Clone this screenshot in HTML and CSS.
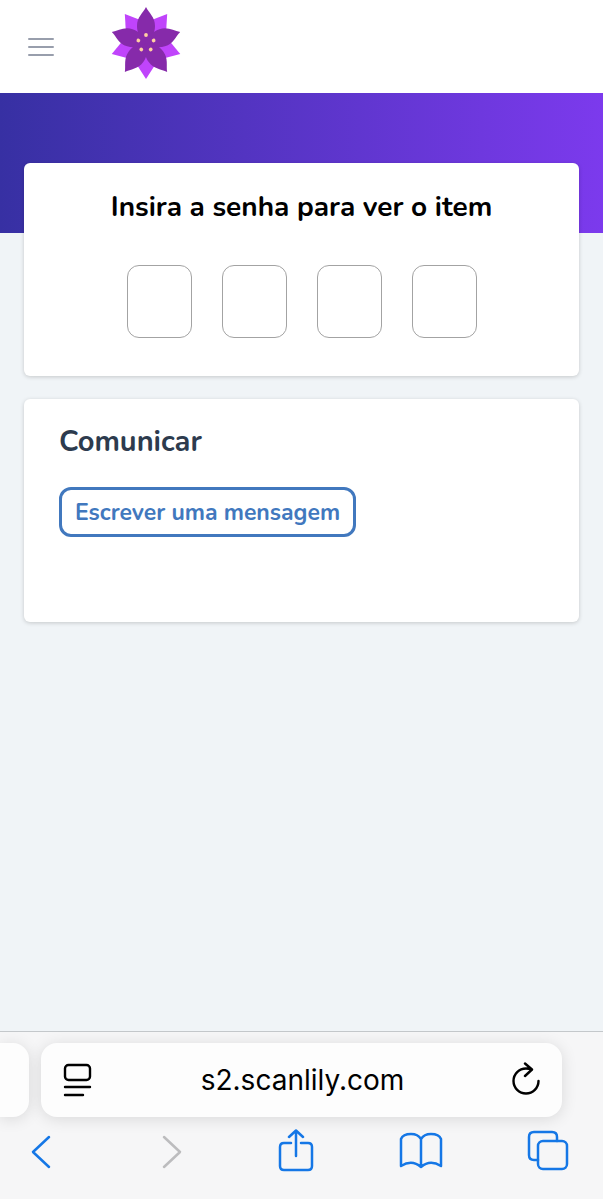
FILE: index.html
```
<!DOCTYPE html>
<html lang="pt">
  <head>
    <meta charset="UTF-8" />
    <meta name="viewport" content="width=device-width, initial-scale=1.0" />
    <title>Scanlily</title>
    <link rel="stylesheet" href="styles.css">
  </head>
  <body>
    <div class="container">
      <!-- top bar -->
      <header class="header">
        <button class="menu" type="button" aria-label="Menu">
          <svg width="28" height="20" viewBox="0 0 28 20" fill="none" stroke="#989eac" stroke-width="2" stroke-linecap="round">
            <path d="M2 2h24M2 10h24M2 18h24" />
          </svg>
        </button>
        <a class="logo" href="#" aria-label="Scanlily">
          <svg width="72" height="74" viewBox="-36 -37 72 74">
            <defs>
              <path id="back" d="M0 -36L9 -22Q12 -15 8 0H-8Q-12 -15 -9 -22Z" />
              <path id="petal" d="M0 -36C3 -30 9 -26 9 -17C9 -11 7 -6 0 0C-7 -6 -9 -11 -9 -17C-9 -26 -3 -30 0 -36Z" />
              <circle id="dot" cy="-8" r="1.9" />
            </defs>
            <g fill="#c044fb">
              <use href="#back" transform="rotate(36)" />
              <use href="#back" transform="rotate(108)" />
              <use href="#back" transform="rotate(180)" />
              <use href="#back" transform="rotate(252)" />
              <use href="#back" transform="rotate(324)" />
            </g>
            <g fill="#862aaa">
              <circle r="12" />
              <use href="#petal" />
              <use href="#petal" transform="rotate(72)" />
              <use href="#petal" transform="rotate(144)" />
              <use href="#petal" transform="rotate(216)" />
              <use href="#petal" transform="rotate(288)" />
            </g>
            <g fill="#ffd0a2">
              <use href="#dot" />
              <use href="#dot" transform="rotate(72)" />
              <use href="#dot" transform="rotate(144)" />
              <use href="#dot" transform="rotate(216)" />
              <use href="#dot" transform="rotate(288)" />
            </g>
          </svg>
        </a>
      </header>

      <div class="banner"></div>

      <main class="main">
        <form class="card pin">
          <h1>Insira a senha para ver o item</h1>
          <div class="digits">
            <input type="text" inputmode="numeric" maxlength="1" aria-label="Dígito 1" />
            <input type="text" inputmode="numeric" maxlength="1" aria-label="Dígito 2" />
            <input type="text" inputmode="numeric" maxlength="1" aria-label="Dígito 3" />
            <input type="text" inputmode="numeric" maxlength="1" aria-label="Dígito 4" />
          </div>
        </form>
        <section class="card contact">
          <h2>Comunicar</h2>
          <button class="message" type="button">Escrever uma mensagem</button>
        </section>
      </main>

      <!-- browser bar -->
      <footer class="browser">
        <div class="tabs">
          <div class="tab previous"></div>
          <div class="tab current">
            <button type="button" aria-label="Página">
              <svg width="30" height="36" viewBox="0 0 30 36" fill="none" stroke="#000" stroke-width="2.4" stroke-linecap="round">
                <rect x="2" y="3" width="25" height="15" rx="3.5" />
                <path d="M2 25h25M2 33h18" />
              </svg>
            </button>
            <span class="url">s2.scanlily.com</span>
            <button type="button" aria-label="Recarregar">
              <svg width="30" height="36" viewBox="0 0 30 36" fill="none" stroke="#000" stroke-width="2.4" stroke-linecap="round" stroke-linejoin="round">
                <path d="M26.500 19A12.500 12.500 0 1 1 14 6.500Q17 6.500 20 7.500M13 1.500L20 7.500L13 14" />
              </svg>
            </button>
          </div>
        </div>
        <nav class="toolbar">
          <button type="button" aria-label="Voltar">
            <svg width="44" height="44" viewBox="0 0 44 44"><path d="M30 8L14 23L30 38" /></svg>
          </button>
          <button class="off" type="button" aria-label="Avançar" disabled>
            <svg width="44" height="44" viewBox="0 0 44 44"><path d="M18 8L34 23L18 38" /></svg>
          </button>
          <button type="button" aria-label="Compartilhar">
            <svg width="44" height="44" viewBox="0 0 44 44"><path d="M18 14H11Q7 14 7 18V37Q7 41 11 41H35Q39 41 39 37V18Q39 14 35 14H28M23 27V2M16 8L23 1.500L30 8" /></svg>
          </button>
          <button type="button" aria-label="Favoritos">
            <svg width="44" height="44" viewBox="0 0 44 44"><path d="M22 10V38Q13 30 2 37V10Q4 5 12 5Q19 5 22 10ZM22 10V38Q31 30 42 37V10Q40 5 32 5Q25 5 22 10Z" /></svg>
          </button>
          <button type="button" aria-label="Abas">
            <svg width="44" height="44" viewBox="0 0 44 44"><path d="M12 31H8Q3 31 3 26V8Q3 3 8 3H26Q31 3 31 8V12" /><rect x="12" y="12" width="29" height="28" rx="5" /></svg>
          </button>
        </nav>
      </footer>
    </div>
  </body>
</html>
```
FILE: styles.css
```
* {
  margin: 0;
  padding: 0;
  box-sizing: border-box;
}
button {
  border: none;
  background: none;
  cursor: pointer;
}
svg {
  display: block;
}

.container {
  min-height: 100vh;
  display: flex;
  flex-direction: column;
  background: #f0f4f7;
  font-family: Nunito, Lato, "Noto Sans", sans-serif;
}

/* top bar */
.header {
  height: 93px;
  padding: 6px 27px 13px;
  display: flex;
  align-items: flex-start;
  gap: 55px;
  background: #fff;
}
.menu {
  padding: 31px 0 0;
}

.banner {
  height: 140px;
  background: linear-gradient(90deg, #3730a3, #7c3aed);
}

/* cards */
.main {
  flex: 1;
  margin-top: -70px;
  padding: 0 24px 24px;
  display: flex;
  flex-direction: column;
  gap: 23px;
}
.card {
  border-radius: 6px;
  background: #fff;
  box-shadow: 0 1px 4px rgba(0, 0, 0, 0.18);
}
.card h1,
.card h2 {
  font-size: 28px;
  line-height: 40px;
  font-weight: 700;
}
.pin {
  padding: 24px 24px 38px;
  text-align: center;
}
.digits {
  margin-top: 38px;
  display: flex;
  justify-content: center;
  gap: 30px;
}
.digits input {
  width: 65px;
  height: 73px;
  border: 1px solid #a3a3a3;
  border-radius: 12px;
  background: #fff;
  font-size: 28px;
  text-align: center;
}
.contact {
  padding: 23px 35px 85px;
}
.contact h2 {
  font-size: 29px;
  color: #2d3b4e;
}
.message {
  height: 50px;
  margin-top: 25px;
  padding: 0 13px;
  border: 3px solid #4178be;
  border-radius: 12px;
  color: #4178be;
  font: inherit;
  font-size: 23px;
  font-weight: 700;
}

/* browser bar */
.browser {
  border-top: 1px solid #c4c8cb;
  padding: 11px 0 26px;
  background: #f6f6f7;
}
.tabs {
  display: flex;
  gap: 12px;
  padding-right: 41px;
}
.tab {
  height: 74px;
  border-radius: 16px;
  background: #fdfdfd;
  box-shadow: 0 2px 16px rgba(0, 0, 0, 0.12);
}
.previous {
  width: 29px;
  border-radius: 0 16px 16px 0;
}
.current {
  flex: 1;
  padding: 0 20px 0 22px;
  display: flex;
  align-items: center;
  justify-content: space-between;
}
.url {
  font-family: Inter, sans-serif;
  font-size: 28px;
  line-height: 36px;
}
.toolbar {
  margin-top: 12px;
  padding: 0 33px 0 19px;
  display: flex;
  justify-content: space-between;
}
.toolbar svg {
  fill: none;
  stroke: #1577e6;
  stroke-width: 2.5px;
  stroke-linecap: round;
  stroke-linejoin: round;
}
.toolbar .off svg {
  stroke: #bcbcbe;
}
```
